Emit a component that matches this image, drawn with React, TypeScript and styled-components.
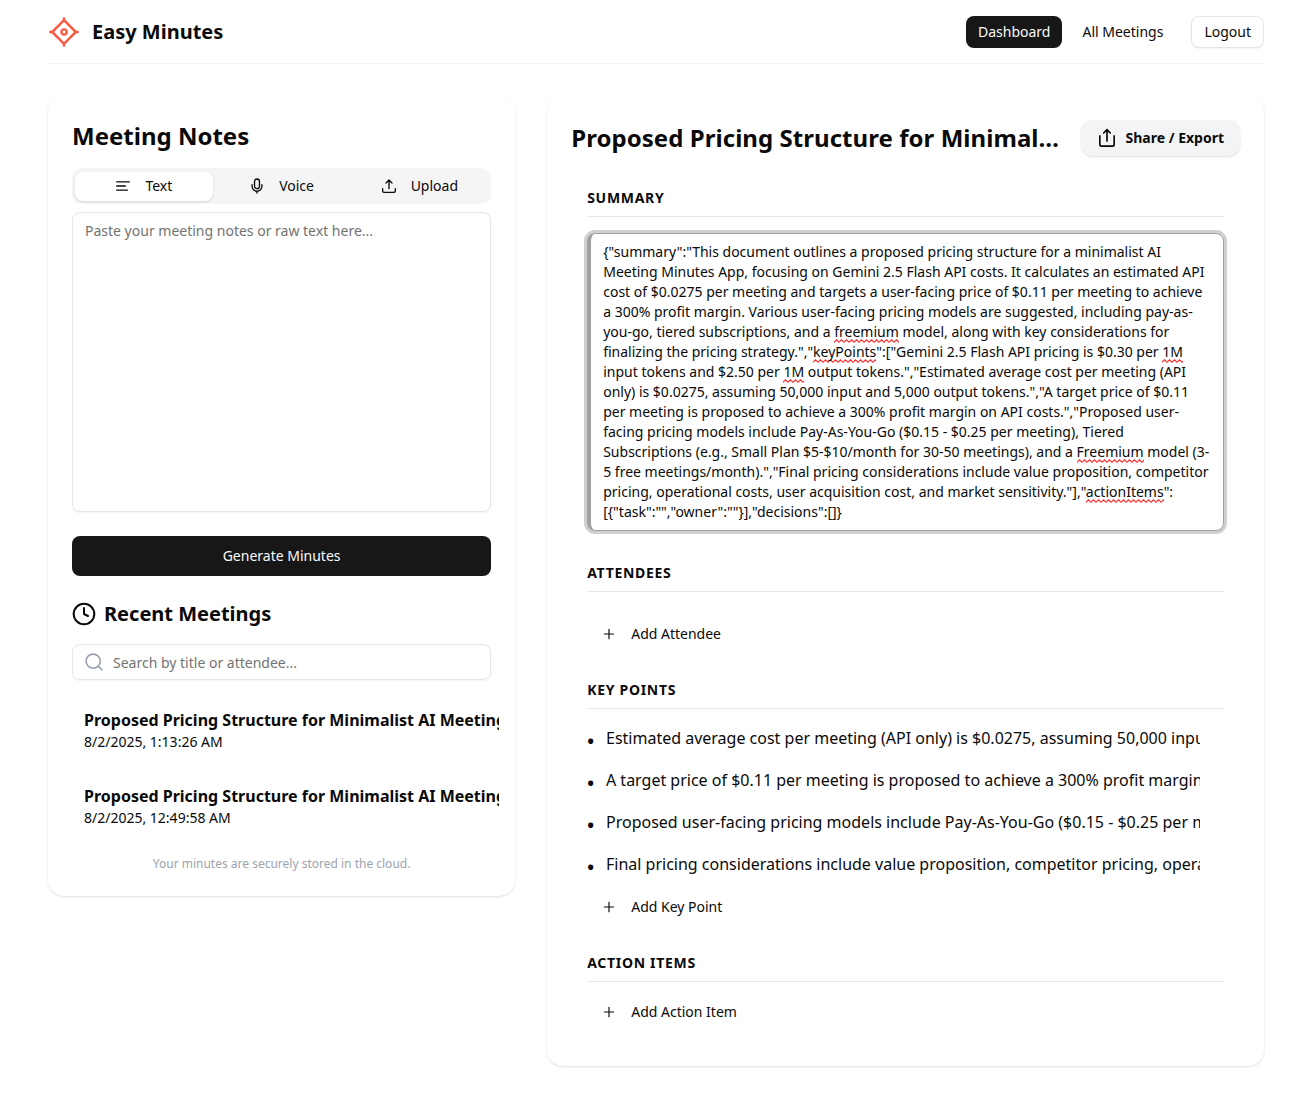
import React from "react";
import styled, { createGlobalStyle, css } from "styled-components";

const GlobalStyle = createGlobalStyle`
  *, *::before, *::after { box-sizing: border-box; }
  body {
    margin: 0;
    background: #fff;
    color: #0a0a0a;
    font-family: "Noto Sans", sans-serif;
    font-size: 16px;
    line-height: 24px;
  }
  h1, h2, h3, p, ul { margin: 0; padding: 0; }
  ul { list-style: none; }
  button, input, textarea { font: inherit; color: inherit; margin: 0; }
  button { cursor: pointer; }
  svg { display: block; flex-shrink: 0; }
`;

const Page = styled.div`
  width: 1312px;
  padding: 0 48px 32px;
`;

const Viewport = styled.div`
  overflow: hidden;
`;

const Header = styled.header`
  display: flex;
  align-items: center;
  justify-content: space-between;
  height: 64px;
  border-bottom: 1px solid #f3f4f6;
`;

const Brand = styled.div`
  display: flex;
  align-items: center;
  gap: 12px;
`;

const BrandName = styled.h1`
  font-size: 20px;
  line-height: 28px;
  font-weight: 700;
`;

const Nav = styled.nav`
  display: flex;
  align-items: center;
  gap: 8px;
`;

const NavButton = styled.button<{ $kind: "solid" | "ghost" | "outline" }>`
  height: 32px;
  padding: 0 12px;
  border: 0;
  border-radius: 8px;
  background: transparent;
  font-size: 14px;
  line-height: 20px;
  ${({ $kind }) =>
    $kind === "solid" &&
    css`
      background: #171717;
      color: #fafafa;
    `}
  ${({ $kind }) =>
    $kind === "outline" &&
    css`
      margin-left: 8px;
      border: 1px solid #e5e5e5;
      background: #fff;
      box-shadow: 0 1px 2px rgba(0, 0, 0, 0.05);
    `}
`;

const Main = styled.main`
  display: grid;
  grid-template-columns: repeat(5, minmax(0, 1fr));
  gap: 32px;
  align-items: start;
  padding-top: 32px;
`;

const Card = styled.section<{ $span: number }>`
  grid-column: span ${({ $span }) => $span};
  padding: 24px;
  border-radius: 16px;
  background: #fff;
  box-shadow: 0 1px 3px rgba(0, 0, 0, 0.1), 0 1px 2px -1px rgba(0, 0, 0, 0.1);
`;

const CardTitle = styled.h2`
  font-size: 24px;
  line-height: 32px;
  font-weight: 700;
`;

const Tabs = styled.div`
  display: grid;
  grid-template-columns: repeat(3, 1fr);
  height: 36px;
  margin: 16px 0 8px;
  padding: 3px;
  border-radius: 10px;
  background: #f5f5f5;
`;

const Tab = styled.button<{ $active?: boolean }>`
  display: flex;
  align-items: center;
  justify-content: center;
  gap: 14px;
  height: 29px;
  align-self: center;
  padding: 0;
  border: 0;
  border-radius: 8px;
  font-size: 14px;
  line-height: 20px;
  background: ${({ $active }) => ($active ? "#fff" : "transparent")};
  box-shadow: ${({ $active }) =>
    $active ? "0 1px 3px rgba(0,0,0,.1), 0 1px 2px -1px rgba(0,0,0,.1)" : "none"};
`;

const NotesInput = styled.textarea`
  display: block;
  width: 100%;
  height: 300px;
  padding: 8px 12px;
  border: 1px solid #e5e5e5;
  border-radius: 8px;
  background: #fff;
  box-shadow: 0 1px 2px rgba(0, 0, 0, 0.05);
  font-size: 14px;
  line-height: 20px;
  resize: none;
  outline: none;
  &::placeholder { color: #737373; }
`;

const GenerateButton = styled.button`
  display: block;
  width: 100%;
  height: 40px;
  margin-top: 24px;
  border: 0;
  border-radius: 8px;
  background: #171717;
  color: #fafafa;
  font-size: 14px;
  line-height: 20px;
`;

const RecentTitle = styled.h3`
  display: flex;
  align-items: center;
  gap: 8px;
  margin: 24px 0 16px;
  font-size: 20px;
  line-height: 28px;
  font-weight: 700;
`;

const SearchBox = styled.label`
  display: flex;
  align-items: center;
  gap: 9px;
  height: 36px;
  padding: 0 12px 0 11px;
  border: 1px solid #e5e5e5;
  border-radius: 8px;
  box-shadow: 0 1px 2px rgba(0, 0, 0, 0.05);
  color: #9ca3af;
`;

const SearchInput = styled.input`
  flex: 1;
  min-width: 0;
  padding: 2px 0 0;
  border: 0;
  outline: none;
  background: transparent;
  color: #0a0a0a;
  font-size: 14px;
  line-height: 20px;
  &::placeholder { color: #737373; }
`;

const MeetingList = styled.ul`
  display: flex;
  flex-direction: column;
  gap: 8px;
  margin: 16px -8px 0 0;
  overflow: hidden;
`;

const MeetingItem = styled.li`
  padding: 12px;
  white-space: nowrap;
`;

const MeetingName = styled.div`
  font-weight: 700;
`;

const MeetingDate = styled.div`
  font-size: 14px;
  line-height: 20px;
`;

const Footnote = styled.p`
  margin-top: 16px;
  color: #9ca3af;
  font-size: 12px;
  line-height: 16px;
  text-align: center;
`;

const DocHeader = styled.div`
  display: flex;
  align-items: center;
  justify-content: space-between;
  gap: 20px;
  height: 36px;
`;

const DocTitle = styled(CardTitle)`
  min-width: 0;
  overflow: hidden;
  letter-spacing: 0.05px;
  text-overflow: ellipsis;
  white-space: nowrap;
`;

const ShareButton = styled.button`
  display: flex;
  flex-shrink: 0;
  align-items: center;
  gap: 8px;
  height: 36px;
  padding: 0 16px 0 17px;
  border: 0;
  border-radius: 12px;
  background: #f3f4f6;
  box-shadow: 0 1px 3px rgba(0, 0, 0, 0.1), 0 1px 2px -1px rgba(0, 0, 0, 0.1);
  font-size: 14px;
  line-height: 20px;
  font-weight: 700;

  svg { margin: 0 1px 0 -1px; }
`;

const Sections = styled.div`
  display: flex;
  flex-direction: column;
  gap: 32px;
  padding: 32px 16px 16px;
`;

const SectionTitle = styled.h3`
  margin-bottom: 16px;
  padding-bottom: 8px;
  border-bottom: 1px solid #e5e7eb;
  font-size: 14px;
  line-height: 20px;
  font-weight: 700;
  letter-spacing: 0.7px;
  text-transform: uppercase;
`;

const SummaryEditor = styled.div`
  padding: 8px 12px;
  border: 1px solid #a1a1a1;
  border-left-width: 4px;
  border-radius: 8px;
  box-shadow: 0 0 0 3px rgba(161, 161, 161, 0.5);
  font-size: 14px;
  line-height: 20px;
`;

const squiggle = encodeURIComponent(
  '<svg xmlns="http://www.w3.org/2000/svg" width="5" height="4"><path d="M-2.5 0.8 0 3.2 2.5 0.8 5 3.2 7.5 0.8" fill="none" stroke="#ff2a2a" stroke-width="1.15"/></svg>'
);

const Misspelled = styled.span`
  padding-bottom: 2px;
  background: url("data:image/svg+xml,${squiggle}") left bottom / 5px 4px repeat-x;
`;

const AddButton = styled.button<{ $offset?: number }>`
  display: flex;
  align-items: center;
  gap: 15px;
  height: 28px;
  margin-top: ${({ $offset = 0 }) => $offset}px;
  padding: 0 16px 0 15px;
  border: 0;
  background: transparent;
  font-size: 14px;
  line-height: 20px;
`;

const PointList = styled.ul`
  display: flex;
  flex-direction: column;
  gap: 16px;
`;

const Point = styled.li`
  display: flex;
  align-items: center;
  gap: 11.8px;
  height: 26px;
  padding-right: 24px;
`;

const Bullet = styled.span`
  width: 7px;
  flex-shrink: 0;
  padding-top: 6px;
  font-size: 18px;
  line-height: 20px;
  font-weight: 700;
`;

const PointText = styled.span`
  flex: 1;
  min-width: 0;
  overflow: hidden;
  white-space: nowrap;
`;

const Logo = () => (
  <svg width="32" height="32" viewBox="0 0 32 32" fill="none" stroke="#f9593f" strokeWidth="2.500">
    <path d="M16 4.200 27.800 16 16 27.800 4.200 16Z" />
    <path d="M16 1.300v4M16 26.700v4M1.300 16h4M26.700 16h4" strokeWidth="2.300" />
    <circle cx="16" cy="16" r="2.600" strokeWidth="2.400" />
  </svg>
);

type IconProps = { size: number; width?: number; children: React.ReactNode };
const Icon = ({ size, width = 2, children }: IconProps) => (
  <svg
    width={size}
    height={size}
    viewBox="0 0 24 24"
    fill="none"
    stroke="currentColor"
    strokeWidth={width}
    strokeLinecap="round"
    strokeLinejoin="round"
  >
    {children}
  </svg>
);

const PlusIcon = () => (
  <Icon size={14}>
    <path d="M12 4v16M4 12h16" />
  </Icon>
);

const meetings = [
  { name: "Proposed Pricing Structure for Minimalist AI Meeting Minutes App", date: "8/2/2025, 1:13:26 AM" },
  { name: "Proposed Pricing Structure for Minimalist AI Meeting Minutes App", date: "8/2/2025, 12:49:58 AM" },
];

const keyPoints = [
  "Estimated average cost per meeting (API only) is $0.0275, assuming 50,000 input and 5,000 output tokens.",
  "A target price of $0.11 per meeting is proposed to achieve a 300% profit margin on API costs.",
  "Proposed user-facing pricing models include Pay-As-You-Go ($0.15 - $0.25 per meeting), Tiered Subscriptions",
  "Final pricing considerations include value proposition, competitor pricing, operational costs, and market sensitivity.",
];

const summary =
  '{"summary":"This document outlines a proposed pricing structure for a minimalist AI Meeting Minutes App, focusing on Gemini 2.5 Flash API costs. It calculates an estimated API cost of $0.0275 per meeting and targets a user-facing price of $0.11 per meeting to achieve a 300% profit margin. Various user-facing pricing models are suggested, including pay-as-you-go, tiered subscriptions, and a freemium model, along with key considerations for finalizing the pricing strategy.","keyPoints":["Gemini 2.5 Flash API pricing is $0.30 per 1M input tokens and $2.50 per 1M output tokens.","Estimated average cost per meeting (API only) is $0.0275, assuming 50,000 input and 5,000 output tokens.","A target price of $0.11 per meeting is proposed to achieve a 300% profit margin on API costs.","Proposed user-facing pricing models include Pay-As-You-Go ($0.15 - $0.25 per meeting), Tiered Subscriptions (e.g., Small Plan $5-$10/month for 30-50 meetings), and a Freemium model (3-5 free meetings/month).","Final pricing considerations include value proposition, competitor pricing, operational costs, user acquisition cost, and market sensitivity."],"actionItems":[{"task":"","owner":""}],"decisions":[]}';

const unknownWords = /(freemium|keyPoints|1M|Freemium|actionItems)/;

export default function App() {
  return (
    <Viewport>
      <GlobalStyle />
      <Page>
        <Header>
          <Brand>
            <Logo />
            <BrandName>Easy Minutes</BrandName>
          </Brand>
          <Nav>
            <NavButton $kind="solid">Dashboard</NavButton>
            <NavButton $kind="ghost">All Meetings</NavButton>
            <NavButton $kind="outline">Logout</NavButton>
          </Nav>
        </Header>
        <Main>
          <Card $span={2}>
            <CardTitle>Meeting Notes</CardTitle>
            <Tabs>
              <Tab $active>
                <Icon size={16}>
                  <path d="M2.500 5.800h19M2.500 12h13M2.500 18.300h16" />
                </Icon>
                Text
              </Tab>
              <Tab>
                <Icon size={16}>
                  <rect x="8.3" y="1.5" width="7.400" height="14.500" rx="3.700" />
                  <path d="M4.600 10v2.300a7.400 7.400 0 0 0 14.800 0V10M12 20v2.500" />
                </Icon>
                Voice
              </Tab>
              <Tab>
                <Icon size={16}>
                  <path d="M12 16V3M7.500 7.500 12 3l4.500 4.500M2.500 16v3.500a2 2 0 0 0 2 2h15a2 2 0 0 0 2-2V16" />
                </Icon>
                Upload
              </Tab>
            </Tabs>
            <NotesInput placeholder="Paste your meeting notes or raw text here..." />
            <GenerateButton>Generate Minutes</GenerateButton>
            <RecentTitle>
              <Icon size={24}>
                <circle cx="12" cy="12" r="10.300" />
                <path d="M12 6v6l4 2" />
              </Icon>
              Recent Meetings
            </RecentTitle>
            <SearchBox>
              <Icon size={20}>
                <circle cx="11" cy="11" r="8.500" />
                <path d="m21.500 21.500-4.400-4.400" />
              </Icon>
              <SearchInput placeholder="Search by title or attendee..." />
            </SearchBox>
            <MeetingList>
              {meetings.map((m) => (
                <MeetingItem key={m.date}>
                  <MeetingName>{m.name}</MeetingName>
                  <MeetingDate>{m.date}</MeetingDate>
                </MeetingItem>
              ))}
            </MeetingList>
            <Footnote>Your minutes are securely stored in the cloud.</Footnote>
          </Card>
          <Card $span={3}>
            <DocHeader>
              <DocTitle>Proposed Pricing Structure for Minimalist AI Meeting Minutes App</DocTitle>
              <ShareButton>
                <Icon size={20}>
                  <path d="M12 15.500V2.500M8 6l4-4 4 4M3.400 9.500v10.300a2 2 0 0 0 2 2h13.200a2 2 0 0 0 2-2V9.500" />
                </Icon>
                Share / Export
              </ShareButton>
            </DocHeader>
            <Sections>
              <section>
                <SectionTitle>Summary</SectionTitle>
                <SummaryEditor>
                  {summary
                    .split(unknownWords)
                    .map((part, i) => (i % 2 ? <Misspelled key={i}>{part}</Misspelled> : part))}
                </SummaryEditor>
              </section>
              <section>
                <SectionTitle>Attendees</SectionTitle>
                <AddButton $offset={28}>
                  <PlusIcon />
                  Add Attendee
                </AddButton>
              </section>
              <section>
                <SectionTitle>Key Points</SectionTitle>
                <PointList>
                  {keyPoints.map((text) => (
                    <Point key={text}>
                      <Bullet>•</Bullet>
                      <PointText>{text}</PointText>
                    </Point>
                  ))}
                </PointList>
                <AddButton $offset={16}>
                  <PlusIcon />
                  Add Key Point
                </AddButton>
              </section>
              <section>
                <SectionTitle>Action Items</SectionTitle>
                <AddButton>
                  <PlusIcon />
                  Add Action Item
                </AddButton>
              </section>
            </Sections>
          </Card>
        </Main>
      </Page>
    </Viewport>
  );
}
